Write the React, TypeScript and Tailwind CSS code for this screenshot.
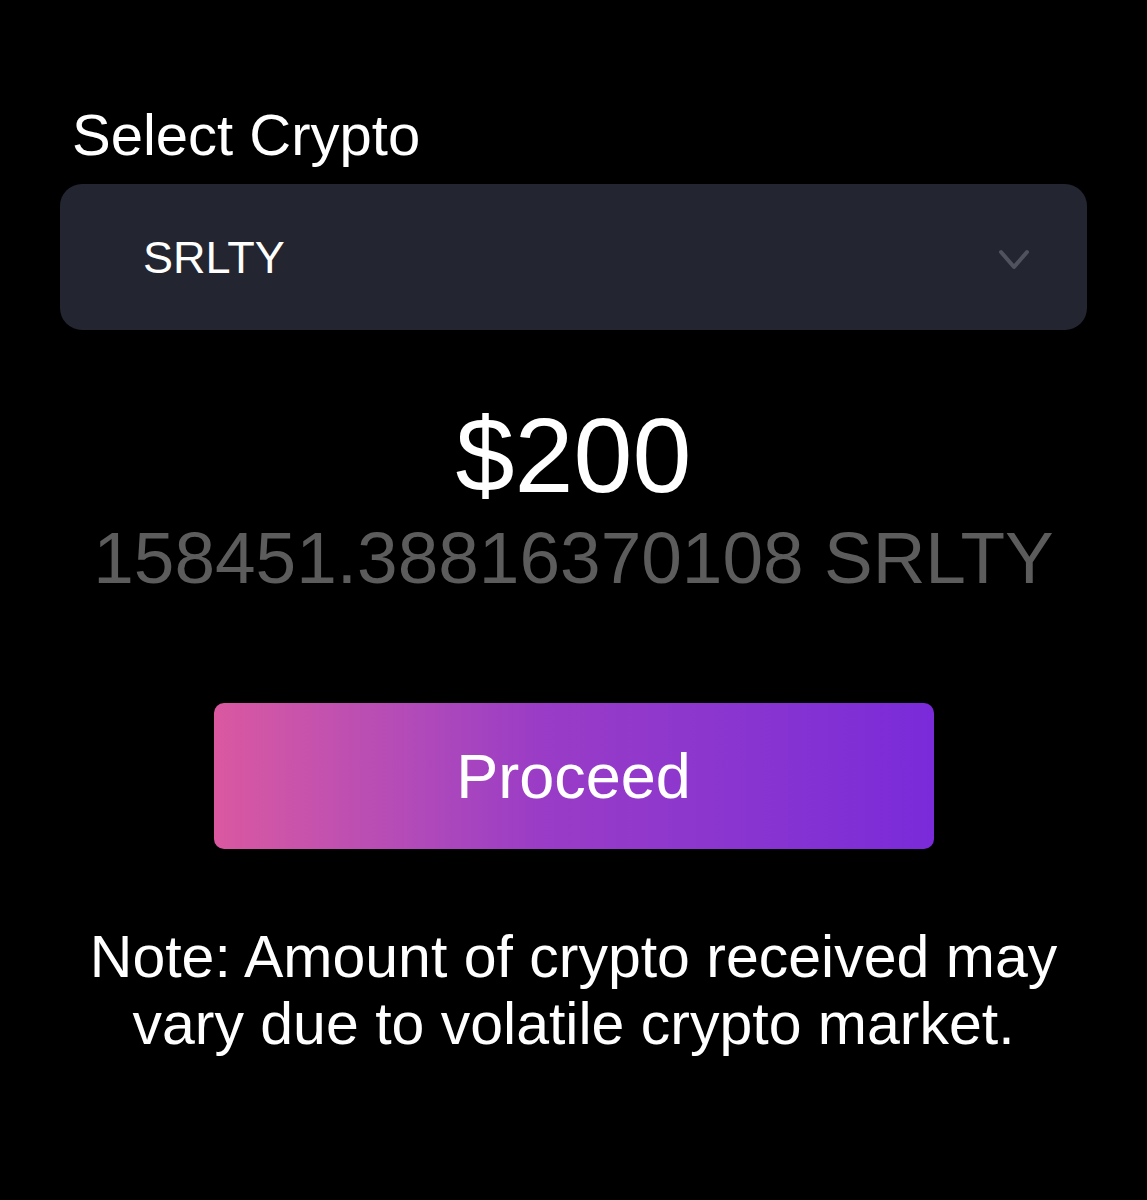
export default function App() {
  return (
    <div className="min-h-[1200px] w-full bg-black px-[60px] font-['Liberation_Sans',Arial,sans-serif] text-white">
      {/* Select label */}
      <div className="pt-[106px] pl-[12px] text-[58px] leading-none">Select Crypto</div>

      {/* Dropdown */}
      <div className="mt-[20px] flex h-[146px] items-center justify-between rounded-[22px] bg-[#232530] pl-[83px] pr-[57px]">
        <span className="text-[45px] leading-none">SRLTY</span>
        <svg width="32" height="24" viewBox="0 0 32 24" fill="none" className="mt-[6px]">
          <path d="M3 4 L16 19 L29 4" stroke="#50535e" strokeWidth="4" strokeLinecap="round" strokeLinejoin="round" />
        </svg>
      </div>

      {/* Amount */}
      <div className="mt-[72px] flex flex-col items-center">
        <div className="text-[106px] leading-none">$200</div>
        <div className="mt-[13px] text-[73px] leading-none text-[#5c5c5c]">158451.38816370108 SRLTY</div>
      </div>

      {/* Proceed */}
      <div className="mt-[109px] flex justify-center">
        <button className="flex h-[146px] w-[720px] items-center justify-center rounded-[10px] bg-linear-to-r from-[#da58a0] via-[#9a3cc6] via-45% to-[#7a2ad9] text-[63px] leading-none text-white">
          Proceed
        </button>
      </div>

      {/* Note */}
      <p className="mt-[75px] text-center text-[59px] leading-[67px]">
        Note: Amount of crypto received may
        <br />
        vary due to volatile crypto market.
      </p>
    </div>
  )
}
